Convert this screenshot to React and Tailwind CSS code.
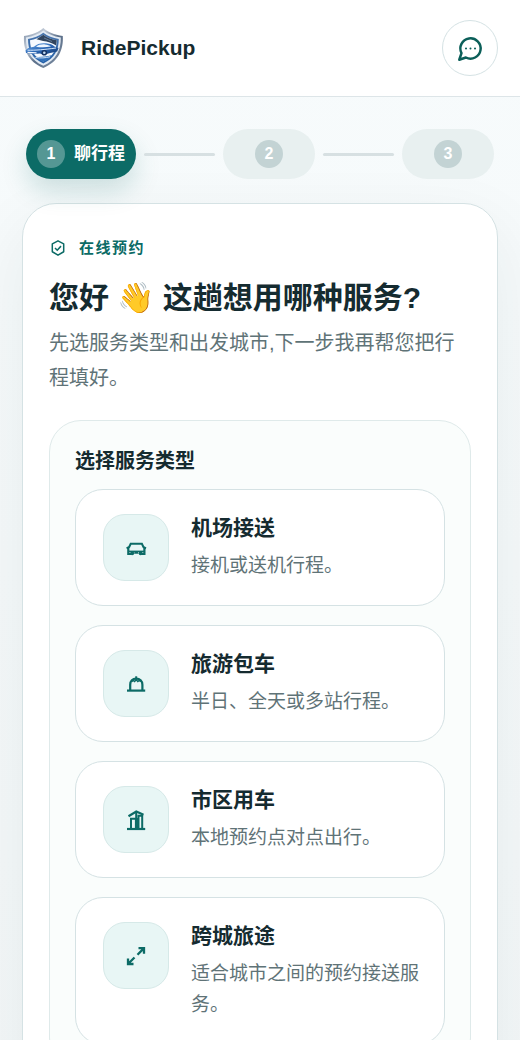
const services = [
  {
    title: "机场接送",
    desc: "接机或送机行程。",
    icon: (
      <>
        <path d="M2.600 12.400l2.600-1.400 1.500-3.200h11.200l1.500 3.200 2.600 1.400" />
        <path d="M4.300 11.500v6.300h3M20.400 11.500v6.300h-3M10.300 16.600h4" strokeWidth="2.200" />
        <path d="M5 15.300h15" strokeWidth="1.400" />
        <circle cx="8.200" cy="17.200" r="2" fill="currentColor" stroke="none" />
        <circle cx="16.600" cy="17.200" r="2" fill="currentColor" stroke="none" />
      </>
    ),
  },
  {
    title: "旅游包车",
    desc: "半日、全天或多站行程。",
    icon: (
      <>
        <path d="M3 18.600h18.200" strokeWidth="2.200" />
        <path d="M6.200 18.500v-5.800c0-3.600 2.300-6 6-6s6.200 2.400 6.200 6v5.800" strokeWidth="2.200" />
        <path d="M12.200 4.300v3.500" />
        <path d="M7.600 9.800l1.600-1.400 1.400 1.200 1.600-1.800 1.600 1.800 1.400-1.200 1.600 1.400" strokeWidth="1.400" />
      </>
    ),
  },
  {
    title: "市区用车",
    desc: "本地预约点对点出行。",
    icon: (
      <>
        <path d="M3 21h18.200" strokeWidth="2.200" />
        <path d="M4.500 8.300l7.800-4.800 7.200 3.300" strokeWidth="2.200" />
        <path d="M7 21V10.800h4.500M12.200 21V4M18.200 21V7.800h-3.700V21" />
        <path d="M12.600 10v11" strokeWidth="3.400" />
      </>
    ),
  },
  {
    title: "跨城旅途",
    desc: "适合城市之间的预约接送服务。",
    icon: (
      <>
        <path d="M14.500 4.200h5.500v5.500M19.800 4.400l-6.300 6.300" strokeWidth="2.300" />
        <path d="M4 14.500v5.500h5.500M4.200 19.800l6.300-6.300" strokeWidth="2.300" />
      </>
    ),
  },
];

const font = "font-['Liberation_Sans','Noto_Sans_CJK_SC',sans-serif]";

function Logo() {
  return (
    <svg className="h-11 w-11" viewBox="0 0 44 44" fill="none" aria-hidden="true">
      <defs>
        <linearGradient id="rim" x1="0" y1="0" x2="1" y2="1">
          <stop offset="0" stopColor="#7b8da5" />
          <stop offset="0.3" stopColor="#c3ccd8" />
          <stop offset="0.55" stopColor="#5b6f89" />
          <stop offset="1" stopColor="#8292a8" />
        </linearGradient>
        <linearGradient id="inner" x1="0" y1="0" x2="0" y2="1">
          <stop offset="0" stopColor="#4a76ad" />
          <stop offset="1" stopColor="#2460a8" />
        </linearGradient>
        <linearGradient id="body" x1="0" y1="0" x2="1" y2="1">
          <stop offset="0" stopColor="#6eabea" />
          <stop offset="0.5" stopColor="#2a66b4" />
          <stop offset="1" stopColor="#16386c" />
        </linearGradient>
      </defs>
      <path
        d="M21.300 2C17 6 10.500 8.800 2 10c-.8 13.500 4 25.500 19.300 32C36.600 35.500 41.600 23.500 40.800 10 32.200 8.800 25.700 6 21.300 2z"
        fill="url(#rim)"
      />
      <path
        d="M21.300 4.500C17 8 11 10.300 4 11.500c-.3 12 4 22.500 17.300 28.300C34.500 34 39 23.500 38.800 11.500 31.700 10.300 25.700 8 21.300 4.500z"
        fill="#e2eaf3"
      />
      <path
        d="M21.300 6.800C17 10 12 12 6 13c0 10.500 3.800 19.200 15.300 24.500C32.800 32.200 36.800 23.500 36.800 13 30.700 12 25.600 10 21.300 6.800z"
        fill="url(#inner)"
      />
      <path
        d="M21.300 8.800C17.500 11.500 13 13.500 8 14.300c.2 9.200 3.500 16.500 13.300 21.200 9.800-4.700 13.300-12 13.500-21.200-5.200-.8-9.700-2.800-13.500-5.500z"
        fill="#f6faff"
      />
      <path d="M14.500 13.200l6.800-4.400c3.800 2.700 8.300 4.700 13.500 5.500l-.7 5.200c-4-2.700-8.600-3.800-13-4.500z" fill="#31455e" />
      <path d="M22 12l8 3.500" stroke="#7189a5" strokeWidth="0.800" />
      <path
        d="M3.500 24.500c1.500-2.500 5-3.300 8.500-3.700 3-3 7-4 12-3.500 4 .3 6.500 1.500 8.500 3.200l4 1.500-1.300 3.500-8.200 1.700-5 1.800-4-1.500-6 .5-8-1z"
        fill="url(#body)"
      />
      <path d="M14 20.700c2.500-1.900 5.500-2.500 9-2.300 2.500.2 4.500.9 6 2-5 1-10 1.100-15 .3z" fill="#eef6fe" />
      <path d="M5.500 24.200c8 .2 17-.6 28.500-2.200" stroke="#d5e7fa" strokeWidth="1" />
      <path d="M5.500 26.300l9 .6" stroke="#f4f9ff" strokeWidth="1.200" />
      <circle cx="22.300" cy="26.800" r="2.800" fill="#153260" />
      <circle cx="22.300" cy="26.800" r="1.300" fill="#c4dcf5" />
      <path d="M10 30.500c5 .6 12 .8 20-1.500-2.500 3.200-5 5-8.700 6.800-5-2.300-8.300-5-11.300-5.300z" fill="#3372ba" />
      <path d="M13.500 31.500c5 .8 10 .5 14.500-.8" stroke="#cfe2f6" strokeWidth="1" />
    </svg>
  );
}

function StepLine() {
  return <li aria-hidden="true" className="h-[3px] flex-1 rounded-full bg-[#d7e0e2]" />;
}

function Step({ number, label }) {
  if (label) {
    return (
      <li
        aria-current="step"
        className="flex h-[50px] items-center gap-[9px] rounded-full bg-[#0c6b66] px-[11px] text-white shadow-[0_12px_26px_rgba(12,107,102,0.18)]"
      >
        <span className="flex h-7 w-7 items-center justify-center rounded-full bg-white/30 text-base font-bold">
          {number}
        </span>
        <span className="text-[17px] font-bold">{label}</span>
      </li>
    );
  }
  return (
    <li className="flex h-[50px] w-[92px] items-center justify-center rounded-full bg-[#e8f0f0]">
      <span className="flex h-7 w-7 items-center justify-center rounded-full bg-[#c3d3d4] text-base font-bold text-white">
        {number}
      </span>
    </li>
  );
}

function ServiceOption({ title, desc, icon }) {
  return (
    <button
      type="button"
      className="flex w-full items-start gap-[22px] rounded-[28px] border border-[#d5e2e4] bg-white py-6 pr-5 pl-[27px] text-left"
    >
      <span className="flex h-[67px] w-[66px] shrink-0 items-center justify-center rounded-[22px] border border-[#d6e9e8] bg-[#e8f6f5] text-[#0c6b66]">
        <svg
          className="h-6 w-6"
          viewBox="0 0 24 24"
          fill="none"
          stroke="currentColor"
          strokeWidth="2"
          aria-hidden="true"
        >
          {icon}
        </svg>
      </span>
      <span className="flex flex-col gap-2">
        <span className="text-[21px] leading-7 font-bold text-[#152b30]">{title}</span>
        <span className="text-[19px] leading-[31px] text-[#5f7377]">{desc}</span>
      </span>
    </button>
  );
}

export default function App() {
  return (
    <div
      className={`min-h-screen bg-linear-to-b from-[#f7fbfc] to-[#f3f7f8] pb-8 text-[#152b30] ${font}`}
    >
      {/* Header */}
      <header className="flex items-center justify-between border-b border-[#dde5e8] bg-white px-[22px] py-5">
        <div className="flex items-center gap-[15px]">
          <Logo />
          <span className="text-[21px] leading-7 font-bold">RidePickup</span>
        </div>
        <button
          type="button"
          aria-label="Chat"
          className="flex h-14 w-14 items-center justify-center rounded-full border border-[#d5e2e4] bg-white text-[#0b5f59]"
        >
          <svg
            className="h-[27px] w-[27px]"
            viewBox="0 0 24 24"
            fill="none"
            stroke="currentColor"
            strokeWidth="2.2"
            strokeLinecap="round"
            strokeLinejoin="round"
            aria-hidden="true"
          >
            <path d="M7.900 20A9 9 0 1 0 4 16.100L2 22Z" />
            <path d="M8 12h.01M12 12h.01M16 12h.01" strokeWidth="1.800" />
          </svg>
        </button>
      </header>

      <main className="pt-8">
        {/* Steps */}
        <ol className="flex items-center gap-2 px-[26px]">
          <Step number="1" label="聊行程" />
          <StepLine />
          <Step number="2" />
          <StepLine />
          <Step number="3" />
        </ol>

        <section className="mx-[22px] mt-6 rounded-[34px] border border-[#d5e2e4] bg-white px-[26px] pt-[30px] pb-8 shadow-[0_24px_70px_rgba(21,43,48,0.07)]">
          <div className="flex h-7 items-center gap-3 text-[#0c6b66]">
            <svg
              className="h-[18px] w-[18px]"
              viewBox="0 0 24 24"
              fill="none"
              stroke="currentColor"
              strokeWidth="2"
              aria-hidden="true"
            >
              <path d="M12 2.500l7.600 4v10.500L12 21.500 4.400 17V6.500z" strokeLinejoin="round" />
              <path d="M8 12l3 3 5-5.500" />
            </svg>
            <span className="text-[15px] font-bold tracking-widest">在线预约</span>
          </div>
          <h1 className="mt-4 text-[30px] leading-10 font-bold">您好 👋 这趟想用哪种服务?</h1>
          <p className="mt-2 text-xl leading-[35px] text-[#5f7377]">
            先选服务类型和出发城市,下一步我再帮您把行程填好。
          </p>

          <div className="mt-6 rounded-[32px] border border-[#dfeaea] bg-[#fafdfc] px-[25px] py-6">
            <h2 className="text-xl leading-8 font-bold">选择服务类型</h2>
            <div className="mt-3 flex flex-col gap-[19px]">
              {services.map((service) => (
                <ServiceOption key={service.title} {...service} />
              ))}
            </div>
          </div>
        </section>
      </main>
    </div>
  );
}
